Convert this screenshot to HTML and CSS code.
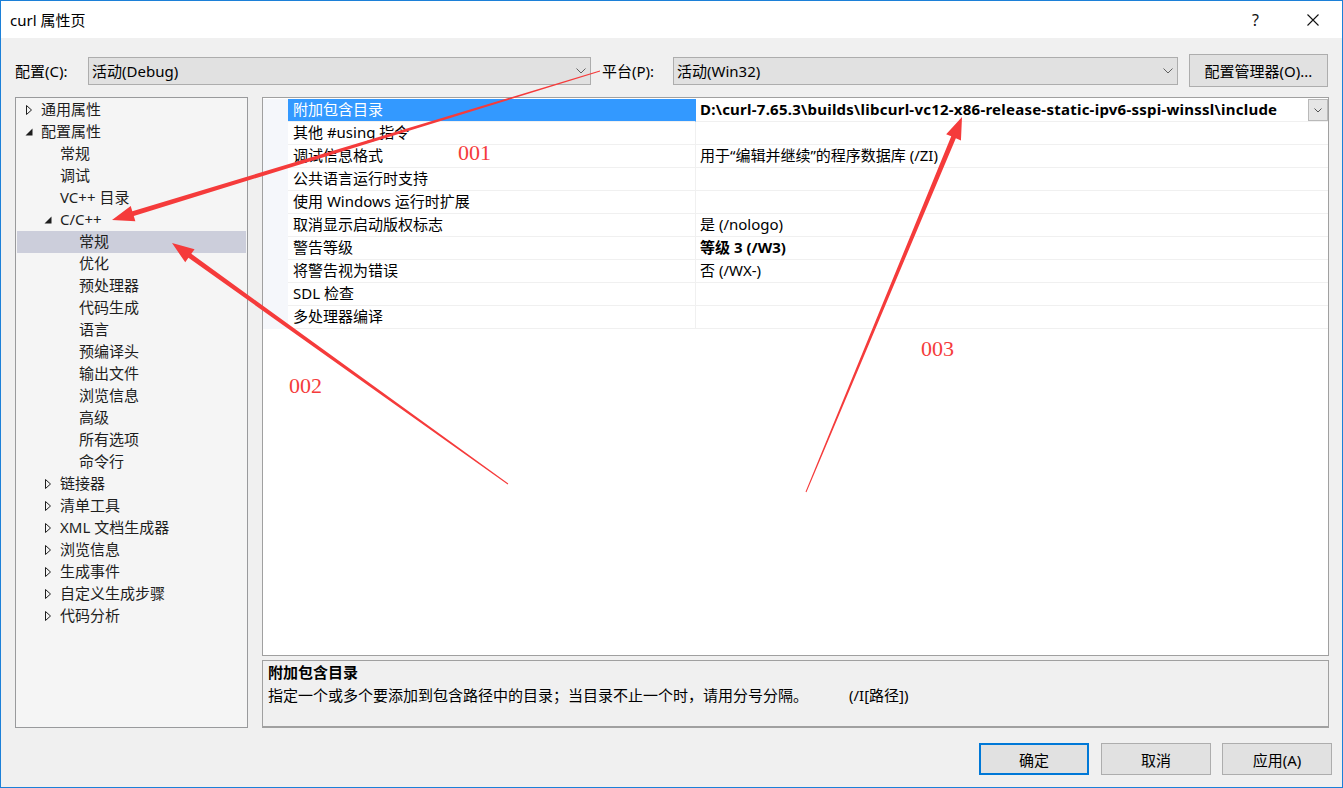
FILE: index.html
```html
<!DOCTYPE html>
<html lang="zh-CN">
<head>
<meta charset="utf-8">
<title>curl 属性页</title>
<link rel="stylesheet" href="styles.css">
</head>
<body>
<div class="window">
  <div class="titlebar">
    <span class="title">curl 属性页</span>
    <span class="tb-btn help">?</span>
    <span class="tb-btn close"><svg width="12" height="12" viewBox="0 0 12 12"><path d="M0.5 0.5 L11.5 11.5 M11.5 0.5 L0.5 11.5" stroke="#111" stroke-width="1.1" fill="none"/></svg></span>
  </div>

  <div class="config-row">
    <span class="lbl lbl-config">配置(C):</span>
    <div class="combo combo-config"><span>活动(Debug)</span><svg class="chev" width="10" height="6" viewBox="0 0 10 6"><path d="M0.5 0.5 L5 5 L9.5 0.5" stroke="#606060" fill="none"/></svg></div>
    <span class="lbl lbl-platform">平台(P):</span>
    <div class="combo combo-platform"><span>活动(Win32)</span><svg class="chev" width="10" height="6" viewBox="0 0 10 6"><path d="M0.5 0.5 L5 5 L9.5 0.5" stroke="#606060" fill="none"/></svg></div>
    <div class="btn btn-manager">配置管理器(O)...</div>
  </div>

  <div class="main">
    <div class="tree">
      <div class="trow l0"><span class="tg"><svg width="8" height="10" viewBox="0 0 8 10"><path d="M1.5 0.5 L6.5 5 L1.5 9.5 Z" stroke="#1e1e1e" fill="none"/></svg></span>通用属性</div>
      <div class="trow l0"><span class="tg"><svg width="8" height="8" viewBox="0 0 8 8"><path d="M7.5 0.5 L7.5 7.5 L0.5 7.5 Z" fill="#1e1e1e"/></svg></span>配置属性</div>
      <div class="trow l1"><span class="tg"></span>常规</div>
      <div class="trow l1"><span class="tg"></span>调试</div>
      <div class="trow l1"><span class="tg"></span>VC++ 目录</div>
      <div class="trow l1"><span class="tg"><svg width="8" height="8" viewBox="0 0 8 8"><path d="M7.5 0.5 L7.5 7.5 L0.5 7.5 Z" fill="#1e1e1e"/></svg></span>C/C++</div>
      <div class="trow l2 selected"><span class="tg"></span>常规</div>
      <div class="trow l2"><span class="tg"></span>优化</div>
      <div class="trow l2"><span class="tg"></span>预处理器</div>
      <div class="trow l2"><span class="tg"></span>代码生成</div>
      <div class="trow l2"><span class="tg"></span>语言</div>
      <div class="trow l2"><span class="tg"></span>预编译头</div>
      <div class="trow l2"><span class="tg"></span>输出文件</div>
      <div class="trow l2"><span class="tg"></span>浏览信息</div>
      <div class="trow l2"><span class="tg"></span>高级</div>
      <div class="trow l2"><span class="tg"></span>所有选项</div>
      <div class="trow l2"><span class="tg"></span>命令行</div>
      <div class="trow l1"><span class="tg"><svg width="8" height="10" viewBox="0 0 8 10"><path d="M1.5 0.5 L6.5 5 L1.5 9.5 Z" stroke="#1e1e1e" fill="none"/></svg></span>链接器</div>
      <div class="trow l1"><span class="tg"><svg width="8" height="10" viewBox="0 0 8 10"><path d="M1.5 0.5 L6.5 5 L1.5 9.5 Z" stroke="#1e1e1e" fill="none"/></svg></span>清单工具</div>
      <div class="trow l1"><span class="tg"><svg width="8" height="10" viewBox="0 0 8 10"><path d="M1.5 0.5 L6.5 5 L1.5 9.5 Z" stroke="#1e1e1e" fill="none"/></svg></span>XML 文档生成器</div>
      <div class="trow l1"><span class="tg"><svg width="8" height="10" viewBox="0 0 8 10"><path d="M1.5 0.5 L6.5 5 L1.5 9.5 Z" stroke="#1e1e1e" fill="none"/></svg></span>浏览信息</div>
      <div class="trow l1"><span class="tg"><svg width="8" height="10" viewBox="0 0 8 10"><path d="M1.5 0.5 L6.5 5 L1.5 9.5 Z" stroke="#1e1e1e" fill="none"/></svg></span>生成事件</div>
      <div class="trow l1"><span class="tg"><svg width="8" height="10" viewBox="0 0 8 10"><path d="M1.5 0.5 L6.5 5 L1.5 9.5 Z" stroke="#1e1e1e" fill="none"/></svg></span>自定义生成步骤</div>
      <div class="trow l1"><span class="tg"><svg width="8" height="10" viewBox="0 0 8 10"><path d="M1.5 0.5 L6.5 5 L1.5 9.5 Z" stroke="#1e1e1e" fill="none"/></svg></span>代码分析</div>
    </div>

    <div class="right">
      <div class="grid">
        <div class="prow">
          <div class="gut"></div>
          <div class="pname sel">附加包含目录</div>
          <div class="pval bold"><span class="vtext">D:\curl-7.65.3\builds\libcurl-vc12-x86-release-static-ipv6-sspi-winssl\include</span><span class="dd"><svg width="8" height="5" viewBox="0 0 8 5"><path d="M0.5 0.5 L4 4 L7.5 0.5" stroke="#555" fill="none"/></svg></span></div>
        </div>
        <div class="prow"><div class="gut"></div><div class="pname">其他 #using 指令</div><div class="pval"></div></div>
        <div class="prow"><div class="gut"></div><div class="pname">调试信息格式</div><div class="pval">用于“编辑并继续”的程序数据库 (/ZI)</div></div>
        <div class="prow"><div class="gut"></div><div class="pname">公共语言运行时支持</div><div class="pval"></div></div>
        <div class="prow"><div class="gut"></div><div class="pname">使用 Windows 运行时扩展</div><div class="pval"></div></div>
        <div class="prow"><div class="gut"></div><div class="pname">取消显示启动版权标志</div><div class="pval">是 (/nologo)</div></div>
        <div class="prow"><div class="gut"></div><div class="pname">警告等级</div><div class="pval bold">等级 3 (/W3)</div></div>
        <div class="prow"><div class="gut"></div><div class="pname">将警告视为错误</div><div class="pval">否 (/WX-)</div></div>
        <div class="prow"><div class="gut"></div><div class="pname">SDL 检查</div><div class="pval"></div></div>
        <div class="prow"><div class="gut"></div><div class="pname">多处理器编译</div><div class="pval"></div></div>
      </div>
      <div class="desc">
        <div class="desc-title">附加包含目录</div>
        <div class="desc-text"><span class="desc-main">指定一个或多个要添加到包含路径中的目录；当目录不止一个时，请用分号分隔。</span><span>(/I[路径])</span></div>
      </div>
    </div>
  </div>

  <div class="footer">
    <div class="btn btn-foot btn-ok">确定</div>
    <div class="btn btn-foot">取消</div>
    <div class="btn btn-foot">应用(A)</div>
  </div>

  <svg class="annot" width="1343" height="788" viewBox="0 0 1343 788">
    <polygon class="arrow" points="599.85,70.52 132.31,211.19 130.70,205.93 112,220 135.38,221.23 133.77,215.97 600.15,71.48"/>
    <polygon class="arrow" points="508.29,483.59 191.34,253.79 194.54,249.32 172,243 185.22,262.32 188.42,257.85 507.71,484.41"/>
    <polygon class="arrow" points="806.46,492.19 955.86,138.27 960.94,140.38 962,117 946.16,134.24 951.24,136.35 805.54,491.81"/>
    <text class="mark" x="458" y="160">001</text>
    <text class="mark" x="289" y="393">002</text>
    <text class="mark" x="921" y="356">003</text>
  </svg>
</div>
</body>
</html>
```

FILE: styles.css
```css
* { box-sizing: border-box; }
html, body { margin: 0; padding: 0; }
body {
  font-family: "Noto Sans", "Noto Sans CJK SC", sans-serif;
  font-size: 15px;
  color: #000;
  background: #fff;
}
.window {
  position: relative;
  width: 1343px;
  height: 788px;
  border: 1px solid #1c80d8;
  background: #f0f0f0;
  display: flex;
  flex-direction: column;
  overflow: hidden;
}
.titlebar {
  flex: none;
  height: 37px;
  background: #fff;
  display: flex;
  align-items: center;
  padding-left: 9px;
  padding-right: 1px;
}
.title { flex: 1; font-size: 15px; color: #000; }
.tb-btn {
  width: 57px;
  height: 37px;
  display: flex;
  align-items: center;
  justify-content: center;
}
.help { font-size: 16px; color: #111; }

.config-row {
  flex: none;
  display: flex;
  align-items: center;
  height: 33px;
  margin-top: 16px;
  padding-left: 14px;
}
.lbl { white-space: nowrap; }
.lbl-config { width: 73px; }
.lbl-platform { width: 71px; margin-left: 11px; }
.combo {
  height: 28px;
  border: 1px solid #adadad;
  background: #e1e1e1;
  display: flex;
  align-items: center;
  justify-content: space-between;
  padding-left: 3px;
  padding-right: 4px;
  white-space: nowrap;
}
.combo-config { width: 503px; }
.combo-platform { width: 505px; }
.btn {
  border: 1px solid #adadad;
  background: #e1e1e1;
  display: flex;
  align-items: center;
  justify-content: center;
  white-space: nowrap;
}
.btn-manager { width: 139px; height: 33px; margin-left: 11px; }

.main {
  flex: none;
  display: flex;
  height: 631px;
  margin-top: 10px;
  padding-left: 14px;
}
.tree {
  width: 233px;
  border: 1px solid #999a9c;
  background: #f5f5f5;
  padding: 1px;
}
.trow {
  height: 22px;
  line-height: 21px;
  padding-bottom: 1px;
  display: flex;
  align-items: center;
  white-space: nowrap;
  color: #1e1e1e;
}
.trow.l0 { padding-left: 7px; }
.trow.l1 { padding-left: 26px; }
.trow.l2 { padding-left: 45px; }
.trow.selected { background: #cccedb; }
.tg {
  width: 17px;
  height: 21px;
  display: flex;
  align-items: center;
  padding-left: 1px;
  flex: none;
}

.right {
  width: 1067px;
  margin-left: 14px;
  display: flex;
  flex-direction: column;
}
.grid {
  height: 559px;
  border: 1px solid #a0a0a0;
  background: #fff;
  padding-top: 1px;
}
.prow { display: flex; height: 23px; }
.gut { width: 25px; background: #f5f7fb; flex: none; }
.pname {
  width: 408px;
  flex: none;
  padding-left: 5px;
  line-height: 21px;
  border-bottom: 1px solid #f0f0f0;
  border-right: 1px solid #f0f0f0;
  white-space: nowrap;
}
.pname.sel { background: #3399ff; color: #fff; border-right-color: #3399ff; }
.pval {
  flex: 1;
  padding-left: 4px;
  line-height: 21px;
  border-bottom: 1px solid #f0f0f0;
  white-space: nowrap;
  display: flex;
  justify-content: space-between;
}
.bold { font-weight: bold; }
.vtext { letter-spacing: 0.24px; }
.dd {
  width: 20px;
  height: 22px;
  border: 1px solid #b9b9b9;
  background: #e6e6e6;
  display: flex;
  align-items: center;
  justify-content: center;
}
.desc {
  height: 68px;
  margin-top: 4px;
  border: 1px solid #a0a0a0;
  border-bottom-width: 2px;
  background: #f0f0f0;
  padding: 0 0 0 5px;
  line-height: 23px;
}
.desc-title { font-weight: bold; }
.desc-text { white-space: nowrap; }
.desc-main { display: inline-block; width: 581px; }

.footer {
  flex: none;
  display: flex;
  justify-content: flex-end;
  gap: 11px;
  margin-top: 15px;
  padding-right: 10px;
}
.btn-foot { width: 110px; height: 32px; }
.btn-ok { border: 2px solid #0078d7; margin-right: 1px; }

.annot {
  position: absolute;
  left: -1px;
  top: -1px;
  pointer-events: none;
}
.arrow { fill: #f53b3b; }
.mark {
  font-family: "Liberation Serif", serif;
  font-size: 22px;
  fill: #f53b3b;
}
```
